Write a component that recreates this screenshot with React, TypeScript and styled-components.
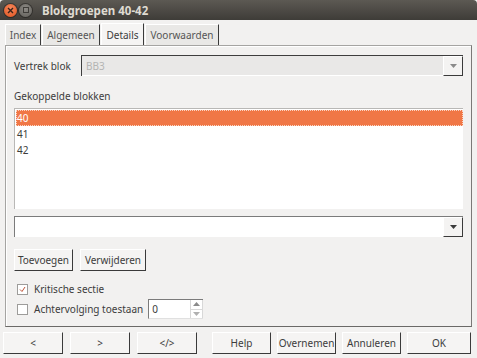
import styled, { createGlobalStyle } from "styled-components";

const Global = createGlobalStyle`
  html, body {
    margin: 0;
    padding: 0;
    background: #f2f1f0;
  }
  body {
    font-family: "Noto Sans", "DejaVu Sans", sans-serif;
    font-size: 10px;
    color: #3c3c3c;
  }
`;

const Window = styled.div`
  width: 477px;
  height: 358px;
  display: flex;
  flex-direction: column;
  background: #f2f1f0;
  overflow: hidden;
`;

const TitleBar = styled.div`
  height: 20px;
  flex: none;
  display: flex;
  align-items: center;
  padding-left: 4px;
  gap: 2px;
  background: linear-gradient(#5c5953, #3e3c38);
  border-radius: 4px 4px 0 0;
`;

const Dot = styled.div<{ $close?: boolean }>`
  width: 13px;
  height: 13px;
  border-radius: 50%;
  display: flex;
  align-items: center;
  justify-content: center;
  background: ${(p) =>
    p.$close
      ? "radial-gradient(circle at 50% 35%, #f78a5f, #e0511c)"
      : "radial-gradient(circle at 50% 35%, #8d8a85, #5f5d58)"};
  box-shadow: 0 0 0 1px rgba(0, 0, 0, 0.35);
`;

const Title = styled.div`
  margin-left: 8px;
  color: #dfdbd2;
  font-weight: bold;
  font-size: 11.5px;
`;

const Body = styled.div`
  flex: 1;
  display: flex;
  flex-direction: column;
  padding: 3px 5px 0 5px;
`;

const TabRow = styled.div`
  display: flex;
  height: 22px;
  align-items: flex-end;
`;

const Tab = styled.div<{ $active?: boolean; $w: number }>`
  width: ${(p) => p.$w}px;
  height: ${(p) => (p.$active ? "22px" : "21px")};
  box-sizing: border-box;
  margin-right: 1px;
  display: flex;
  align-items: center;
  justify-content: center;
  background: ${(p) => (p.$active ? "#f5f4f3" : "#e9e8e6")};
  border-top: 1px solid #ffffff;
  border-left: 1px solid #ffffff;
  border-right: 1px solid #3a3a3a;
  color: ${(p) => (p.$active ? "#3c3c3c" : "#555")};
`;

const Panel = styled.div`
  height: 282px;
  box-sizing: border-box;
  border: 1px solid #a5a4a2;
  border-right-color: #7a7977;
  border-bottom-color: #6a6967;
  box-shadow: inset 1px 1px 0 #ffffff;
  padding: 9px 8px 0 8px;
  display: flex;
  flex-direction: column;
`;

const FieldRow = styled.div`
  display: flex;
  align-items: center;
  height: 21px;
`;

const Label = styled.div<{ $w?: number }>`
  width: ${(p) => (p.$w ? `${p.$w}px` : "auto")};
  flex: none;
  white-space: nowrap;
`;

const Combo = styled.div<{ $disabled?: boolean }>`
  flex: 1;
  height: 21px;
  display: flex;
  box-sizing: border-box;
  background: ${(p) => (p.$disabled ? "#e9e8e7" : "#ffffff")};
  border-top: 1px solid ${(p) => (p.$disabled ? "#3e3e3e" : "#7b7b7b")};
  border-left: 1px solid ${(p) => (p.$disabled ? "#3e3e3e" : "#7b7b7b")};
`;

const ComboText = styled.div<{ $disabled?: boolean }>`
  flex: 1;
  display: flex;
  align-items: center;
  padding-left: 4px;
  color: ${(p) => (p.$disabled ? "#b4b4b3" : "#3c3c3c")};
  border-bottom: 1px solid #ffffff;
`;

const DropButton = styled.div`
  width: 20px;
  flex: none;
  box-sizing: border-box;
  display: flex;
  align-items: center;
  justify-content: center;
  background: #f4f3f2;
  border-top: 1px solid #ffffff;
  border-left: 1px solid #ffffff;
  border-right: 1px solid #3a3a3a;
  border-bottom: 1px solid #3a3a3a;
`;

const SectionLabel = styled.div`
  margin-top: 13px;
  height: 14px;
  line-height: 14px;
`;

const ListBox = styled.div`
  margin-top: 5px;
  height: 101px;
  box-sizing: border-box;
  background: #ffffff;
  border-top: 1px solid #b9b8b6;
  border-left: 1px solid #b9b8b6;
  padding: 1px 0 0 1px;
`;

const ListItem = styled.div<{ $selected?: boolean }>`
  height: 16px;
  box-sizing: border-box;
  display: flex;
  align-items: center;
  padding-left: 1px;
  background: ${(p) => (p.$selected ? "#f07746" : "transparent")};
  color: ${(p) => (p.$selected ? "#ffffff" : "#3c3c3c")};
  outline: ${(p) => (p.$selected ? "1px dotted #fbd5c4" : "none")};
  outline-offset: -1px;
`;

const ComboWrap = styled.div`
  margin-top: 7px;
  display: flex;
  height: 21px;
`;

const ButtonRow = styled.div`
  margin-top: 12px;
  display: flex;
  gap: 7px;
`;

const Button = styled.div<{ $w?: number }>`
  height: 22px;
  width: ${(p) => (p.$w ? `${p.$w}px` : "auto")};
  padding: ${(p) => (p.$w ? "0" : "0 3px")};
  box-sizing: border-box;
  display: flex;
  align-items: center;
  justify-content: center;
  background: #f5f4f3;
  border-top: 1px solid #ffffff;
  border-left: 1px solid #ffffff;
  border-right: 1px solid #3a3a3a;
  border-bottom: 1px solid #3a3a3a;
  color: #3c3c3c;
  white-space: nowrap;
`;

const CheckRow = styled.div<{ $top: number }>`
  margin-top: ${(p) => p.$top}px;
  display: flex;
  align-items: center;
  height: 20px;
  padding-left: 3px;
`;

const Box = styled.div`
  width: 11px;
  height: 11px;
  box-sizing: border-box;
  background: #ffffff;
  border: 1px solid #9d9c9a;
  margin-right: 6px;
  display: flex;
  align-items: center;
  justify-content: center;
`;

const Spin = styled.div`
  margin-left: 5px;
  width: 55px;
  height: 20px;
  box-sizing: border-box;
  display: flex;
  background: #ffffff;
  border-top: 1px solid #7b7b7b;
  border-left: 1px solid #7b7b7b;
  border-bottom: 1px solid #e0e0e0;
`;

const SpinText = styled.div`
  flex: 1;
  display: flex;
  align-items: center;
  padding-left: 3px;
`;

const SpinArrows = styled.div`
  width: 11px;
  display: flex;
  flex-direction: column;
  border-left: 1px solid #d8d8d8;
  border-right: 1px solid #d8d8d8;
`;

const SpinHalf = styled.div`
  flex: 1;
  display: flex;
  align-items: center;
  justify-content: center;
  & + & {
    border-top: 1px solid #d8d8d8;
  }
`;

const Footer = styled.div`
  margin-top: 5px;
  margin-left: -2px;
  display: flex;
  gap: 15px;
`;

const FooterGroup = styled.div<{ $gap: number }>`
  display: flex;
  gap: ${(p) => p.$gap}px;
`;

function Arrow({ color, up }: { color: string; up?: boolean }) {
  return (
    <svg width="7" height="4" viewBox="0 0 7 4">
      <polygon points={up ? "0,4 7,4 3.5,0" : "0,0 7,0 3.5,4"} fill={color} />
    </svg>
  );
}

export default function App() {
  return (
    <Window>
      <Global />
      <TitleBar>
        <Dot $close>
          <svg width="7" height="7" viewBox="0 0 7 7">
            <path d="M1 1L6 6M6 1L1 6" stroke="#3b2218" strokeWidth="1.4" />
          </svg>
        </Dot>
        <Dot>
          <svg width="6" height="6" viewBox="0 0 6 6">
            <rect x="0.5" y="0.5" width="5" height="5" fill="none" stroke="#3e3c38" />
          </svg>
        </Dot>
        <Title>Blokgroepen 40-42</Title>
      </TitleBar>
      <Body>
        <TabRow>
          <Tab $w={36}>Index</Tab>
          <Tab $w={58}>Algemeen</Tab>
          <Tab $w={43} $active>Details</Tab>
          <Tab $w={74}>Voorwaarden</Tab>
        </TabRow>
        <Panel>
          <FieldRow>
            <Label $w={67}>Vertrek blok</Label>
            <Combo $disabled>
              <ComboText $disabled>BB3</ComboText>
              <DropButton>
                <Arrow color="#8a8a8a" />
              </DropButton>
            </Combo>
          </FieldRow>
          <SectionLabel>Gekoppelde blokken</SectionLabel>
          <ListBox>
            <ListItem $selected>40</ListItem>
            <ListItem>41</ListItem>
            <ListItem>42</ListItem>
          </ListBox>
          <ComboWrap>
            <Combo>
              <ComboText />
              <DropButton>
                <Arrow color="#3a3a3a" />
              </DropButton>
            </Combo>
          </ComboWrap>
          <ButtonRow>
            <Button $w={59}>Toevoegen</Button>
            <Button $w={66}>Verwijderen</Button>
          </ButtonRow>
          <CheckRow $top={8}>
            <Box>
              <svg width="7" height="7" viewBox="0 0 7 7">
                <path d="M1 3.5L3 5.5L6 1" fill="none" stroke="#c0553a" strokeWidth="1" />
              </svg>
            </Box>
            <Label>Kritische sectie</Label>
          </CheckRow>
          <CheckRow $top={0}>
            <Box />
            <Label>Achtervolging toestaan</Label>
            <Spin>
              <SpinText>0</SpinText>
              <SpinArrows>
                <SpinHalf>
                  <Arrow color="#8a8a8a" up />
                </SpinHalf>
                <SpinHalf>
                  <Arrow color="#b0b0b0" />
                </SpinHalf>
              </SpinArrows>
            </Spin>
          </CheckRow>
        </Panel>
        <Footer>
          <FooterGroup $gap={7}>
            <Button $w={60}>&lt;</Button>
            <Button $w={60}>&gt;</Button>
            <Button $w={60}>&lt;/&gt;</Button>
          </FooterGroup>
          <FooterGroup $gap={6}>
            <Button $w={59}>Help</Button>
            <Button $w={59}>Overnemen</Button>
            <Button $w={59}>Annuleren</Button>
            <Button $w={64}>OK</Button>
          </FooterGroup>
        </Footer>
      </Body>
    </Window>
  );
}
